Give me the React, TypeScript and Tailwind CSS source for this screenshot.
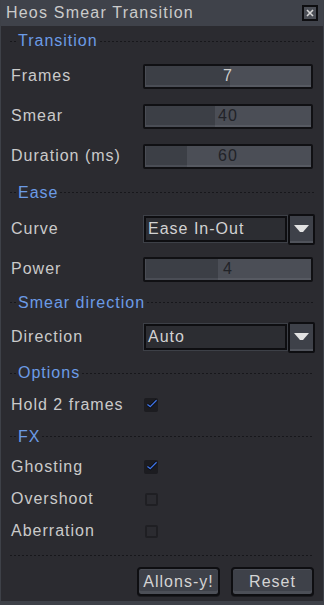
import React from 'react';

const font = { fontFamily: '"Liberation Sans", Arial, sans-serif' };

const dash = 'bg-[repeating-linear-gradient(90deg,#17171b_0_2px,transparent_2px_4px)]';

function Section({ title, h }: { title: string; h: string }) {
  return (
    <div className={`flex items-center px-[9px] ${h}`}>
      <div className={`h-px w-[6px] ${dash}`} />
      <span className="px-[2px] text-[16px] tracking-[1px] text-[#6b9be6] leading-none">{title}</span>
      <div className={`h-px flex-1 ${dash}`} />
    </div>
  );
}

function Label({ children }: { children: React.ReactNode }) {
  return <span className="w-[132px] shrink-0 text-[16px] tracking-[1px] text-[#cacaca] leading-none">{children}</span>;
}

function Slider({ value, pct, light }: { value: string; pct: number; light?: boolean }) {
  return (
    <div className="relative h-[25px] w-[170px] rounded-[2px] border-2 border-[#101013] bg-[#4b4e56] shadow-[inset_0_-2px_0_#575a62]">
      <div className="h-full bg-[#3c3f46] shadow-[inset_1px_-2px_0_#4a4d55]" style={{ width: `${pct}%` }} />
      <span
        className={`absolute inset-0 flex items-center justify-center text-[16px] tracking-[1px] leading-none ${light ? 'text-[#cfcfcf]' : 'text-[#222328]'}`}
      >
        {value}
      </span>
    </div>
  );
}

function Select({ value }: { value: string }) {
  return (
    <div className="flex h-[31px] w-[172px] items-center">
      <div className="flex h-[28px] flex-1 items-center border border-[#3d4047]">
        <div className="flex h-full w-full items-center border-2 border-[#0e0e11] bg-[#2c2d32] pl-[2px]">
          <span className="text-[16px] tracking-[1px] text-[#d2d2d2] leading-none">{value}</span>
        </div>
      </div>
      <div className="flex h-[31px] w-[27px] items-center justify-center rounded-[2px] border-2 border-[#0e0e11] bg-[#3e4149] shadow-[inset_0_-2px_0_#50535b]">
        <svg width="15" height="8" viewBox="0 0 15 8">
          <path d="M0 0H15L9 7H6Z" fill="#e2e2e2" />
        </svg>
      </div>
    </div>
  );
}

function Check({ on }: { on?: boolean }) {
  return on ? (
    <div className="ml-[1px] flex h-[14px] w-[14px] items-center justify-center rounded-[2px] bg-[#1c1c20]">
      <svg width="17" height="13" viewBox="0 0 17 13" className="-mt-[3px] ml-[2px]">
        <path d="M2 8L6 11L15 2" fill="none" stroke="#0a0a0c" strokeWidth="4" />
        <path d="M2 8L6 11L15 2" fill="none" stroke="#3f73e3" strokeWidth="2" />
      </svg>
    </div>
  ) : (
    <div className="ml-[2px] h-[13px] w-[13px] rounded-[2px] border-2 border-[#1f1f23]" />
  );
}

function Button({ children, w }: { children: React.ReactNode; w: string }) {
  return (
    <div className={`flex h-[29px] ${w} items-center justify-center rounded-[4px] border-2 border-[#0e0e11] bg-[#3e4149] shadow-[inset_0_1px_0_#4a4d55,inset_0_-3px_0_#4c4f57,0_1px_0_#1a1a1e] text-[16px] tracking-[1px] text-[#d4d4d4] leading-none`}>
      {children}
    </div>
  );
}

export default function App() {
  return (
    <div style={font} className="flex h-[605px] w-[324px] flex-col bg-[#2b2b30] border-x border-[#3e4148] border-b-4 select-none">
      {/* title bar */}
      <div className="flex h-[26px] shrink-0 items-center justify-between bg-[#3f424a] pl-[5px] pr-[5px]">
        <span className="text-[16px] tracking-[1.2px] text-[#cbcbcb] leading-none">Heos Smear Transition</span>
        <div className="flex h-[16px] w-[16px] items-center justify-center border-2 border-[#0e0e11] bg-[#4b4e56]">
          <svg width="8" height="8" viewBox="0 0 8 8">
            <path d="M1 1L7 7M7 1L1 7" stroke="#d6d6d6" strokeWidth="1.6" />
          </svg>
        </div>
      </div>

      <Section title="Transition" h="h-[30px]" />
      <div className="flex h-[40px] items-center pl-[10px]">
        <Label>Frames</Label>
        <Slider value="7" pct={51} light />
      </div>
      <div className="flex h-[40px] items-center pl-[10px]">
        <Label>Smear</Label>
        <Slider value="40" pct={42} />
      </div>
      <div className="flex h-[40px] items-center pl-[10px]">
        <Label>Duration (ms)</Label>
        <Slider value="60" pct={25} />
      </div>

      <Section title="Ease" h="h-[33px]" />
      <div className="flex h-[40px] items-center pl-[10px]">
        <Label>Curve</Label>
        <Select value="Ease In-Out" />
      </div>
      <div className="flex h-[40px] items-center pl-[10px]">
        <Label>Power</Label>
        <Slider value="4" pct={44} />
      </div>

      <Section title="Smear direction" h="h-[27px]" />
      <div className="flex h-[42px] items-center pl-[10px]">
        <Label>Direction</Label>
        <Select value="Auto" />
      </div>

      <Section title="Options" h="h-[30px]" />
      <div className="flex h-[34px] items-center pl-[10px]">
        <Label>Hold 2 frames</Label>
        <Check on />
      </div>

      <Section title="FX" h="h-[29px]" />
      <div className="flex h-[32px] items-center pl-[10px]">
        <Label>Ghosting</Label>
        <Check on />
      </div>
      <div className="flex h-[32px] items-center pl-[10px]">
        <Label>Overshoot</Label>
        <Check />
      </div>
      <div className="flex h-[32px] items-center pl-[10px]">
        <Label>Aberration</Label>
        <Check />
      </div>

      <div className="px-[9px] pt-[8px]">
        <div className={`h-px w-full ${dash}`} />
      </div>
      <div className="flex justify-end gap-[11px] pr-[9px] pt-[11px]">
        <Button w="w-[83px]">Allons-y!</Button>
        <Button w="w-[83px]">Reset</Button>
      </div>
    </div>
  );
}
